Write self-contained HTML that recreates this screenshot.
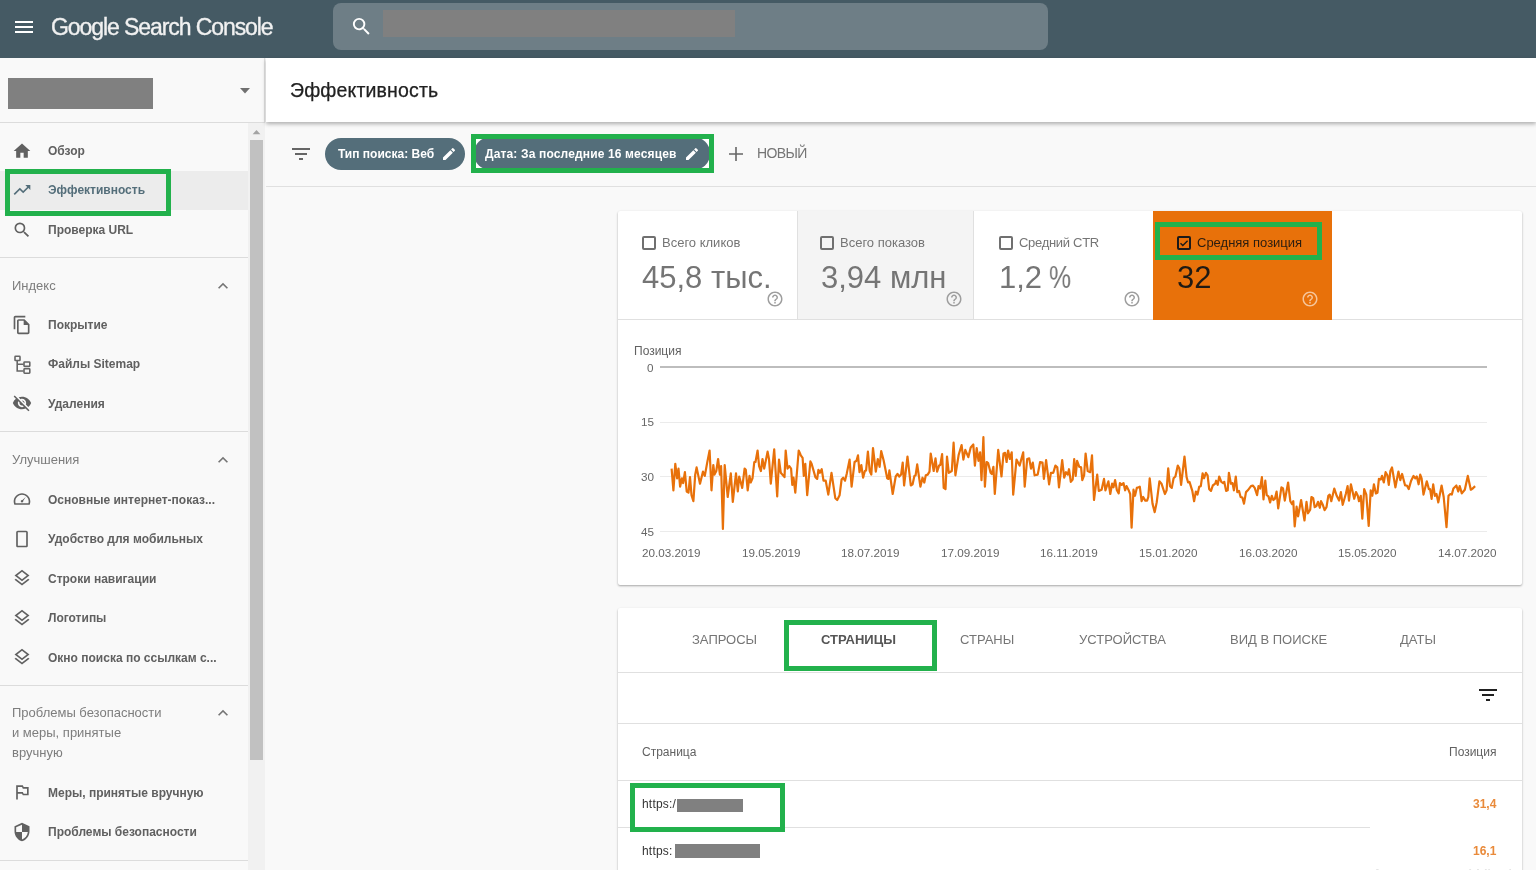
<!DOCTYPE html>
<html><head><meta charset="utf-8">
<style>
*{box-sizing:border-box}
html,body{margin:0;padding:0;width:1536px;height:870px;overflow:hidden;background:#f9f9f9;font-family:"Liberation Sans",sans-serif;-webkit-font-smoothing:antialiased}
.t{will-change:transform}
.a{position:absolute}
.t{position:absolute;white-space:nowrap;line-height:1}
svg{display:block}
#hdr{left:0;top:0;width:1536px;height:58px;background:#455a64}
#side{left:0;top:58px;width:265px;height:812px;background:#f9f9f9;border-right:1px solid #e0e0e0}
.sep{position:absolute;left:0;width:248px;height:1px;background:#dcdcdc}
.nav{position:absolute;left:48px;font-size:12px;font-weight:700;color:#606060}
.sec{position:absolute;left:12px;font-size:13px;color:#7d7d7d}
.ico{position:absolute;fill:#616161}
.green{position:absolute;border:5px solid #22b14c}
.card{position:absolute;background:#fff;border-radius:2px;box-shadow:0 1px 2px rgba(0,0,0,.25),0 1px 3px rgba(0,0,0,.1)}
.lbl{position:absolute;font-size:13px;color:#757575}
.big{position:absolute;font-size:31px;color:#757575}
.cb{position:absolute;width:14px;height:14px;border:2px solid #707070;border-radius:2px}
.tab{position:absolute;font-size:13px;color:#757575}
.dl{position:absolute;font-size:11.7px;color:#666}
</style></head><body>
<!-- header -->
<div id="hdr" class="a">
  <svg class="a" style="left:12px;top:15px" width="24" height="24" viewBox="0 0 24 24"><path fill="#fff" d="M3 18h18v-2H3v2zm0-5h18v-2H3v2zm0-7v2h18V6H3z"/></svg>
  <div class="t" style="left:51px;top:16px;font-size:23px;letter-spacing:-1.08px;color:#f1f1f1;-webkit-text-stroke:.35px #f1f1f1">Google Search Console</div>
  <div class="a" style="left:333px;top:3px;width:715px;height:47px;border-radius:8px;background:#6e7e86"></div>
  <svg class="a" style="left:350px;top:15px" width="23" height="23" viewBox="0 0 24 24"><path fill="#fff" d="M15.5 14h-.79l-.28-.27A6.471 6.471 0 0 0 16 9.5 6.5 6.5 0 1 0 9.5 16c1.61 0 3.09-.59 4.23-1.57l.27.28v.79l5 4.99L20.49 19l-4.99-5zm-6 0C7.01 14 5 11.99 5 9.5S7.01 5 9.5 5 14 7.01 14 9.5 11.99 14 9.5 14z"/></svg>
  <div class="a" style="left:383px;top:10px;width:352px;height:27px;background:#808080"></div>
</div>

<!-- sidebar -->
<div id="side" class="a">
  <div class="a" style="left:8px;top:20px;width:145px;height:31px;background:#808080"></div>
  <svg class="a" style="left:233px;top:20px" width="24" height="24" viewBox="0 0 24 24"><path fill="#707070" d="M7 10l5 5.5 5-5.5z"/></svg>
  <div class="sep" style="top:64px;width:265px"></div>
</div>
<!-- scrollbar -->
<div class="a" style="left:248px;top:123px;width:17px;height:747px;background:#f1f1f1"></div>
<div class="a" style="left:250px;top:140px;width:13px;height:620px;background:#c1c1c1"></div>
<svg class="a" style="left:252px;top:129px" width="9" height="6" viewBox="0 0 9 6"><path fill="#a3a3a3" d="M.6 5.2L4.5 1 8.4 5.2z"/></svg>

<!-- selected nav bg -->
<div class="a" style="left:0;top:171px;width:248px;height:39px;background:#ececec"></div>

<!-- nav items -->
<svg class="ico" style="left:12px;top:141px" width="20" height="20" viewBox="0 0 24 24"><path d="M10 20v-6h4v6h5v-8h3L12 3 2 12h3v8z"/></svg>
<div class="t nav" style="top:145px">Обзор</div>
<svg class="ico" style="left:12px;top:180px;fill:#546e7a" width="20" height="20" viewBox="0 0 24 24"><path d="M16 6l2.29 2.29-4.88 4.88-4-4L2 16.59 3.41 18l6-6 4 4 6.3-6.29L22 12V6z"/></svg>
<div class="t nav" style="top:184px;color:#546e7a">Эффективность</div>
<svg class="ico" style="left:12px;top:220px" width="20" height="20" viewBox="0 0 24 24"><path d="M15.5 14h-.79l-.28-.27A6.471 6.471 0 0 0 16 9.5 6.5 6.5 0 1 0 9.5 16c1.61 0 3.09-.59 4.23-1.57l.27.28v.79l5 4.99L20.49 19l-4.99-5zm-6 0C7.01 14 5 11.99 5 9.5S7.01 5 9.5 5 14 7.01 14 9.5 11.99 14 9.5 14z"/></svg>
<div class="t nav" style="top:224px">Проверка URL</div>
<div class="sep" style="top:257px"></div>

<div class="t sec" style="top:279px">Индекс</div>
<svg class="ico" style="left:213px;top:276px;fill:#757575" width="20" height="20" viewBox="0 0 24 24"><path d="M12 8l-6 6 1.41 1.41L12 10.83l4.59 4.58L18 14z"/></svg>
<svg class="ico" style="left:11.7px;top:314.7px" width="20" height="20" viewBox="0 0 24 24"><path d="M16 1H4c-1.1 0-2 .9-2 2v14h2V3h12V1zm-1 4H8c-1.1 0-1.99.9-1.99 2L6 21c0 1.1.89 2 1.99 2H19c1.1 0 2-.9 2-2V11l-6-6zM8 21V7h6v5h5v9H8z"/></svg>
<div class="t nav" style="top:319px">Покрытие</div>
<svg class="ico" style="left:12px;top:354px" width="20" height="20" viewBox="0 0 20 20"><g fill="none" stroke="#666" stroke-width="1.6"><rect x="3" y="2.3" width="5" height="4.2" rx=".6"/><path d="M5.2 6.5V17H11.6M5.2 10.2H11.6"/><rect x="12" y="8" width="5.8" height="4.4" rx=".6"/><rect x="12" y="14.8" width="5.8" height="4.4" rx=".6"/></g></svg>
<div class="t nav" style="top:358px">Файлы Sitemap</div>
<svg class="ico" style="left:12px;top:393px" width="20" height="20" viewBox="0 0 24 24"><path d="M12 7c2.76 0 5 2.24 5 5 0 .65-.13 1.26-.36 1.83l2.92 2.92c1.51-1.26 2.7-2.890 3.43-4.75-1.73-4.39-6-7.5-11-7.5-1.4 0-2.74.25-3.98.7l2.16 2.16C10.74 7.13 11.35 7 12 7zM2 4.27l2.28 2.28.46.46A11.804 11.804 0 0 0 1 12c1.73 4.39 6 7.5 11 7.5 1.55 0 3.03-.3 4.38-.84l.42.42L19.73 22 21 20.73 3.27 3 2 4.270zM7.53 9.8l1.55 1.55c-.05.21-.08.43-.08.65 0 1.66 1.34 3 3 3 .22 0 .44-.03.65-.08l1.55 1.55c-.67.33-1.41.53-2.2.53-2.76 0-5-2.24-5-5 0-.79.2-1.53.53-2.2zm4.31-.78l3.150 3.15.02-.16c0-1.66-1.34-3-3-3l-.17.01z"/></svg>
<div class="t nav" style="top:398px">Удаления</div>
<div class="sep" style="top:431px"></div>

<div class="t sec" style="top:453px">Улучшения</div>
<svg class="ico" style="left:213px;top:450px;fill:#757575" width="20" height="20" viewBox="0 0 24 24"><path d="M12 8l-6 6 1.41 1.41L12 10.83l4.59 4.58L18 14z"/></svg>
<svg class="ico" style="left:12px;top:489px" width="20" height="20" viewBox="0 0 24 24"><path d="M12 5C6.5 5 2 9.5 2 15c0 1.1.2 2.2.6 3.2l.3.8h18.2l.3-.8c.4-1 .6-2.1.6-3.2 0-5.5-4.5-10-10-10zm7.7 12H4.3C4.1 16.4 4 15.700 4 15c0-4.4 3.6-8 8-8s8 3.6 8 8c0 .7-.1 1.4-.3 2zM16.5 9.5l-4 3.600c-.8-.2-1.700.3-1.900 1.100-.3.800.2 1.600 1 1.900.800.2 1.600-.2 1.900-1 .1-.3.1-.6 0-.9z"/></svg>
<div class="t nav" style="top:494px">Основные интернет-показ...</div>
<svg class="ico" style="left:12px;top:529px" width="20" height="20" viewBox="0 0 24 24"><path d="M17 2H7c-1.1 0-2 .9-2 2v16c0 1.1.9 2 2 2h10c1.1 0 2-.9 2-2V4c0-1.1-.9-2-2-2zm0 18H7V4h10v16z"/></svg>
<div class="t nav" style="top:533px">Удобство для мобильных</div>
<svg class="ico" style="left:12px;top:568px" width="20" height="20" viewBox="0 0 24 24"><path d="M11.99 18.54l-7.37-5.73L3 14.07l9 7 9-7-1.63-1.27-7.38 5.74zM12 16l7.36-5.73L21 9l-9-7-9 7 1.63 1.27L12 16zm0-11.47L17.74 9 12 13.47 6.26 9 12 4.53z"/></svg>
<div class="t nav" style="top:573px">Строки навигации</div>
<svg class="ico" style="left:12px;top:608px" width="20" height="20" viewBox="0 0 24 24"><path d="M11.99 18.54l-7.37-5.73L3 14.07l9 7 9-7-1.63-1.27-7.38 5.74zM12 16l7.36-5.73L21 9l-9-7-9 7 1.63 1.27L12 16zm0-11.47L17.74 9 12 13.47 6.26 9 12 4.53z"/></svg>
<div class="t nav" style="top:612px">Логотипы</div>
<svg class="ico" style="left:12px;top:647px" width="20" height="20" viewBox="0 0 24 24"><path d="M11.99 18.54l-7.37-5.73L3 14.07l9 7 9-7-1.63-1.27-7.38 5.74zM12 16l7.36-5.73L21 9l-9-7-9 7 1.63 1.27L12 16zm0-11.47L17.74 9 12 13.47 6.26 9 12 4.53z"/></svg>
<div class="t nav" style="top:652px">Окно поиска по ссылкам с...</div>
<div class="sep" style="top:685px"></div>

<div class="t sec" style="top:707px;line-height:20px;top:703px;white-space:normal;width:200px">Проблемы безопасности<br>и меры, принятые<br>вручную</div>
<svg class="ico" style="left:213px;top:703px;fill:#757575" width="20" height="20" viewBox="0 0 24 24"><path d="M12 8l-6 6 1.41 1.41L12 10.83l4.59 4.58L18 14z"/></svg>
<svg class="ico" style="left:12px;top:782px" width="20" height="20" viewBox="0 0 24 24"><path d="M14 6l-1-2H5v17h2v-7h5l1 2h7V6h-6zm4 8h-4l-1-2H7V6h5l1 2h5v6z"/></svg>
<div class="t nav" style="top:787px">Меры, принятые вручную</div>
<svg class="ico" style="left:12px;top:822px" width="20" height="20" viewBox="0 0 24 24"><path d="M12 1L3 5v6c0 5.55 3.84 10.74 9 12 5.16-1.26 9-6.45 9-12V5l-9-4zm0 10.99h7c-.53 4.12-3.28 7.79-7 8.94V12H5V6.3l7-3.11v8.8z"/></svg>
<div class="t nav" style="top:826px">Проблемы безопасности</div>
<div class="sep" style="top:860px"></div>

<div class="green" style="left:5px;top:169px;width:166px;height:47px"></div>

<!-- page header -->
<div class="a" style="left:266px;top:58px;width:1270px;height:64px;background:#fff;box-shadow:0 2px 4px rgba(0,0,0,.3)"></div>
<div class="t" style="left:289.5px;top:80.5px;font-size:19.5px;letter-spacing:.15px;color:#212121;-webkit-text-stroke:.25px #212121">Эффективность</div>

<!-- filter bar -->
<div class="a" style="left:266px;top:186px;width:1270px;height:1px;background:#e0e0e0"></div>
<svg class="ico" style="left:289px;top:141.5px;fill:#666" width="24" height="24" viewBox="0 0 24 24"><path d="M10 18h4v-2h-4v2zM3 6v2h18V6H3zm3 7h12v-2H6v2z"/></svg>
<div class="a" style="left:325px;top:138px;width:140px;height:32px;border-radius:16px;background:#546e7a"></div>
<div class="t" style="left:338px;top:147.5px;font-size:12px;font-weight:700;color:#fff">Тип поиска: Веб</div>
<svg class="a" style="left:441px;top:146px" width="16" height="16" viewBox="0 0 24 24"><path fill="#fff" d="M3 17.250V21h3.75L17.81 9.94l-3.75-3.75L3 17.25zM20.71 7.04a.996.996 0 0 0 0-1.41l-2.34-2.34a.996.996 0 0 0-1.41 0l-1.83 1.83 3.75 3.75 1.83-1.83z"/></svg>
<div class="a" style="left:471px;top:134px;width:243px;height:39px;background:#fff"></div>
<div class="a" style="left:474px;top:137px;width:236px;height:33px;border-radius:16px;background:#546e7a"></div>
<div class="t" style="left:485px;top:147.5px;font-size:12px;font-weight:700;letter-spacing:.15px;color:#fff">Дата: За последние 16 месяцев</div>
<svg class="a" style="left:684px;top:146px" width="16" height="16" viewBox="0 0 24 24"><path fill="#fff" d="M3 17.250V21h3.75L17.81 9.94l-3.75-3.75L3 17.25zM20.71 7.04a.996.996 0 0 0 0-1.41l-2.34-2.34a.996.996 0 0 0-1.41 0l-1.83 1.83 3.75 3.75 1.83-1.83z"/></svg>
<div class="green" style="left:471px;top:134px;width:243px;height:39px"></div>
<svg class="a" style="left:724px;top:142px" width="24" height="24" viewBox="0 0 24 24"><path fill="#666" d="M19 12.8h-6.2V19h-1.6v-6.2H5v-1.6h6.2V5h1.6v6.2H19z"/></svg>
<div class="t" style="left:756.5px;top:145.5px;font-size:14px;letter-spacing:-.6px;color:#757575">НОВЫЙ</div>

<!-- card 1 -->
<div class="card" style="left:618px;top:211px;width:904px;height:374px"></div>
<div class="a" style="left:797px;top:211px;width:177px;height:108px;background:#f4f4f4;border-left:1px solid #e0e0e0;border-right:1px solid #e0e0e0"></div>
<div class="a" style="left:618px;top:319px;width:904px;height:1px;background:#e0e0e0"></div>
<div class="a" style="left:1153px;top:211px;width:179px;height:109px;background:#e8710a"></div>

<div class="cb" style="left:642px;top:236px"></div>
<div class="t lbl" style="left:662px;top:236px">Всего кликов</div>
<div class="t big" style="left:642px;top:262px">45,8 тыс.</div>
<div class="cb" style="left:820px;top:236px"></div>
<div class="t lbl" style="left:840px;top:236px">Всего показов</div>
<div class="t big" style="left:821px;top:262px">3,94 млн</div>
<div class="cb" style="left:999px;top:236px"></div>
<div class="t lbl" style="left:1019px;top:236px;letter-spacing:-.3px">Средний CTR</div>
<div class="t big" style="left:999px;top:262px">1,2</div><div class="t big" style="left:1049px;top:262px;transform:scaleX(.8);transform-origin:0 0">%</div>
<div class="cb" style="left:1177px;top:236px;border-color:#1a1a1a"></div>
<svg class="a" style="left:1177px;top:236px" width="14" height="14" viewBox="0 0 14 14"><path d="M3.5 7.2l2.3 2.3 4.8-4.8" fill="none" stroke="#1a1a1a" stroke-width="1.4"/></svg>
<div class="t lbl" style="left:1197px;top:236px;color:#2a1d10">Средняя позиция</div>
<div class="t big" style="left:1177px;top:262px;color:#1f1a14">32</div>
<svg class="a" style="left:766px;top:290px" width="18" height="18" viewBox="0 0 24 24"><path fill="#9e9e9e" d="M11 18h2v-2h-2v2zm1-16C6.48 2 2 6.48 2 12s4.48 10 10 10 10-4.48 10-10S17.52 2 12 2zm0 18c-4.41 0-8-3.590-8-8s3.59-8 8-8 8 3.59 8 8-3.59 8-8 8zm0-14c-2.21 0-4 1.79-4 4h2c0-1.1.9-2 2-2s2 .9 2 2c0 2-3 1.75-3 5h2c0-2.25 3-2.5 3-5 0-2.21-1.79-4-4-4z"/></svg>
<svg class="a" style="left:945px;top:290px" width="18" height="18" viewBox="0 0 24 24"><path fill="#9e9e9e" d="M11 18h2v-2h-2v2zm1-16C6.48 2 2 6.48 2 12s4.48 10 10 10 10-4.48 10-10S17.52 2 12 2zm0 18c-4.41 0-8-3.590-8-8s3.59-8 8-8 8 3.59 8 8-3.59 8-8 8zm0-14c-2.21 0-4 1.79-4 4h2c0-1.1.9-2 2-2s2 .9 2 2c0 2-3 1.75-3 5h2c0-2.25 3-2.5 3-5 0-2.21-1.79-4-4-4z"/></svg>
<svg class="a" style="left:1123px;top:290px" width="18" height="18" viewBox="0 0 24 24"><path fill="#9e9e9e" d="M11 18h2v-2h-2v2zm1-16C6.48 2 2 6.48 2 12s4.48 10 10 10 10-4.48 10-10S17.52 2 12 2zm0 18c-4.41 0-8-3.590-8-8s3.59-8 8-8 8 3.59 8 8-3.59 8-8 8zm0-14c-2.21 0-4 1.79-4 4h2c0-1.1.9-2 2-2s2 .9 2 2c0 2-3 1.75-3 5h2c0-2.25 3-2.5 3-5 0-2.21-1.79-4-4-4z"/></svg>
<svg class="a" style="left:1301px;top:290px" width="18" height="18" viewBox="0 0 24 24"><path fill="#f6c59a" d="M11 18h2v-2h-2v2zm1-16C6.48 2 2 6.48 2 12s4.48 10 10 10 10-4.48 10-10S17.52 2 12 2zm0 18c-4.41 0-8-3.590-8-8s3.59-8 8-8 8 3.59 8 8-3.59 8-8 8zm0-14c-2.21 0-4 1.79-4 4h2c0-1.1.9-2 2-2s2 .9 2 2c0 2-3 1.75-3 5h2c0-2.25 3-2.5 3-5 0-2.21-1.79-4-4-4z"/></svg>
<div class="green" style="left:1155px;top:222px;width:167px;height:38px"></div>

<!-- chart -->
<div class="t" style="left:634px;top:345px;font-size:12px;color:#616161">Позиция</div>
<div class="a" style="left:660px;top:366px;width:827px;height:2px;background:#bdbdbd"></div>
<div class="a" style="left:660px;top:422px;width:827px;height:1px;background:#ebebeb"></div>
<div class="a" style="left:660px;top:476px;width:827px;height:1px;background:#ebebeb"></div>
<div class="a" style="left:660px;top:531px;width:827px;height:1px;background:#ebebeb"></div>
<div class="t dl" style="left:647px;top:362px">0</div>
<div class="t dl" style="left:641px;top:416px">15</div>
<div class="t dl" style="left:641px;top:471px">30</div>
<div class="t dl" style="left:641px;top:526px">45</div>
<svg class="a" style="left:0;top:0" width="1536" height="870"><path d="M671.6,468.6 L673.4,490.3 L675.3,463.8 L677.1,478.3 L678.5,468.6 L680.1,486.7 L681.9,478.3 L683.1,483.1 L684.9,472.2 L686.7,491.5 L688.5,492.7 L690.0,477.1 L691.5,495.2 L693.4,501.2 L695.2,474.6 L696.6,467.4 L700.0,483.7 L703.0,471.6 L704.8,475.9 L707.2,462.6 L709.6,450.5 L711.5,490.3 L713.3,465.0 L714.5,474.6 L716.3,471.0 L718.1,459.0 L719.9,474.6 L721.1,466.2 L722.9,529.0 L724.7,465.0 L727.7,497.0 L730.8,473.4 L732.8,501.8 L736.0,473.4 L737.8,491.5 L739.2,476.5 L742.2,487.9 L744.6,468.6 L745.8,469.8 L747.7,490.3 L749.5,475.9 L750.7,482.5 L752.5,478.3 L754.3,462.0 L755.5,462.0 L757.6,450.5 L759.1,466.2 L760.9,471.0 L762.5,459.0 L764.2,468.6 L767.6,451.7 L769.0,459.0 L770.8,483.7 L774.2,449.3 L777.2,496.4 L779.0,459.6 L780.8,472.8 L784.5,477.1 L785.7,450.5 L787.5,468.6 L789.3,466.2 L791.1,468.6 L792.3,484.9 L793.5,477.7 L795.3,492.7 L798.7,450.5 L800.8,455.3 L802.6,457.8 L803.8,475.9 L805.3,463.8 L807.2,495.2 L810.4,461.4 L811.6,463.8 L815.4,477.1 L817.2,478.9 L818.4,469.8 L819.9,472.8 L821.7,469.2 L823.5,480.7 L825.7,480.7 L828.3,494.6 L831.5,472.8 L835.3,498.2 L837.2,500.0 L839.6,495.2 L841.6,479.5 L843.2,477.7 L845.0,480.7 L846.8,473.4 L849.6,459.6 L851.6,486.7 L854.6,462.0 L856.5,460.8 L858.0,455.3 L859.5,472.2 L861.3,465.0 L863.1,477.7 L864.9,471.0 L866.1,470.4 L867.9,451.7 L869.7,471.0 L871.3,474.6 L873.0,448.1 L875.8,471.6 L877.8,459.0 L879.6,466.8 L881.2,451.1 L883.6,460.2 L887.2,478.3 L888.4,478.9 L889.4,470.4 L892.7,494.0 L895.7,476.5 L897.5,474.0 L899.3,476.5 L901.1,474.6 L902.7,462.6 L904.1,485.5 L907.5,456.5 L910.8,485.5 L912.6,484.3 L914.4,475.9 L915.6,475.3 L917.2,464.4 L920.4,486.7 L922.5,477.7 L924.3,482.5 L925.8,475.3 L927.7,474.6 L929.5,471.6 L930.7,453.5 L933.7,471.0 L935.5,458.4 L937.1,471.6 L939.1,465.6 L940.3,465.0 L942.1,454.1 L943.7,487.9 L945.5,489.1 L947.0,456.5 L948.8,472.8 L951.8,471.0 L953.6,442.7 L955.4,475.3 L958.7,454.7 L961.6,445.1 L963.4,459.6 L965.3,449.9 L968.3,457.2 L970.7,447.5 L973.3,444.5 L974.9,465.6 L976.7,448.1 L978.5,460.8 L980.1,452.3 L981.5,480.1 L983.4,437.2 L984.9,486.7 L986.6,462.0 L988.2,463.2 L990.6,472.8 L991.8,474.0 L993.4,466.8 L994.8,494.0 L998.2,449.9 L1001.5,476.5 L1003.5,453.5 L1005.1,452.9 L1006.6,462.0 L1008.1,450.5 L1009.9,459.0 L1011.7,452.3 L1013.2,494.6 L1016.5,459.6 L1019.6,465.6 L1023.2,452.3 L1024.7,486.7 L1027.2,459.0 L1029.2,458.4 L1031.0,468.6 L1032.8,462.6 L1034.6,475.3 L1037.7,474.6 L1040.1,462.0 L1042.5,462.6 L1043.9,478.9 L1046.1,460.2 L1049.1,484.3 L1050.9,472.8 L1053.3,472.8 L1055.4,465.6 L1057.3,467.4 L1059.0,487.3 L1062.2,460.2 L1064.2,477.7 L1066.0,472.2 L1067.8,474.6 L1069.0,469.2 L1070.8,481.9 L1072.7,479.5 L1074.2,459.0 L1075.7,475.9 L1077.1,460.8 L1079.3,466.8 L1081.1,467.4 L1082.3,480.1 L1084.1,475.3 L1085.6,453.5 L1087.7,471.0 L1090.2,472.2 L1092.0,455.3 L1094.0,500.0 L1097.2,474.6 L1098.8,490.9 L1101.6,489.7 L1104.0,478.9 L1105.4,490.3 L1108.4,481.3 L1110.3,494.0 L1112.1,483.7 L1113.5,487.3 L1115.1,480.1 L1116.9,490.3 L1118.7,493.4 L1119.9,483.1 L1121.7,484.9 L1123.5,483.1 L1125.1,490.3 L1126.5,486.1 L1128.4,489.7 L1130.2,494.0 L1131.6,527.7 L1133.5,489.7 L1135.0,495.8 L1136.8,487.9 L1138.6,487.3 L1139.8,486.7 L1141.6,501.2 L1143.2,497.0 L1145.3,500.6 L1147.1,500.6 L1148.3,497.0 L1149.7,478.3 L1152.5,503.6 L1154.7,512.1 L1156.7,502.4 L1159.4,481.3 L1161.5,483.7 L1164.9,494.0 L1166.6,490.3 L1168.2,468.4 L1170.0,486.1 L1171.8,487.9 L1173.6,478.3 L1175.4,476.5 L1177.8,465.6 L1179.4,468.6 L1181.1,484.9 L1184.5,456.5 L1186.6,477.1 L1188.1,482.5 L1189.5,481.9 L1192.3,490.9 L1194.1,501.2 L1195.9,491.5 L1197.5,494.6 L1199.2,486.7 L1200.8,486.1 L1202.6,473.4 L1204.0,478.3 L1205.9,472.8 L1207.6,475.3 L1209.2,489.1 L1211.0,490.9 L1212.8,485.5 L1215.2,483.7 L1216.1,480.7 L1217.7,484.9 L1219.2,476.5 L1221.3,481.9 L1223.1,483.1 L1224.3,481.9 L1226.1,490.9 L1227.7,490.3 L1228.9,472.8 L1230.9,483.7 L1232.5,483.1 L1233.9,490.3 L1235.8,476.5 L1237.3,492.1 L1239.0,490.9 L1240.6,497.0 L1242.4,497.6 L1244.0,503.6 L1246.0,492.1 L1247.8,490.3 L1251.0,486.1 L1252.8,485.5 L1254.7,487.9 L1257.1,495.2 L1258.5,486.1 L1260.1,488.5 L1261.9,477.1 L1263.5,499.4 L1265.3,480.7 L1266.7,495.2 L1268.5,496.4 L1270.1,502.4 L1271.8,495.8 L1273.4,500.0 L1274.9,498.8 L1276.6,491.5 L1278.2,508.4 L1281.4,487.3 L1283.0,488.5 L1284.8,500.6 L1288.1,482.5 L1290.3,501.2 L1292.1,504.2 L1293.3,501.2 L1294.7,526.5 L1296.6,506.6 L1298.1,516.3 L1301.1,500.0 L1304.5,520.5 L1306.5,501.8 L1308.0,513.3 L1310.2,509.6 L1311.4,497.0 L1313.2,498.2 L1314.7,507.2 L1316.4,506.0 L1318.0,501.8 L1319.8,507.8 L1321.0,501.2 L1322.8,504.8 L1324.6,510.2 L1326.5,507.2 L1328.3,495.8 L1329.7,494.6 L1331.3,501.2 L1334.3,488.5 L1336.7,495.8 L1339.1,500.6 L1340.9,492.1 L1342.7,504.8 L1345.8,494.0 L1347.6,486.1 L1349.0,500.6 L1350.9,484.3 L1354.2,498.8 L1356.0,492.1 L1357.8,495.8 L1359.0,501.2 L1360.8,495.8 L1362.3,518.7 L1364.2,489.1 L1366.3,494.6 L1368.7,525.9 L1370.7,490.3 L1372.3,495.8 L1373.9,484.3 L1375.9,493.4 L1377.5,492.7 L1378.9,478.9 L1380.8,479.5 L1382.0,475.9 L1383.8,482.5 L1385.6,472.2 L1387.4,475.3 L1388.8,484.9 L1390.4,471.0 L1392.0,467.4 L1395.4,487.3 L1398.4,471.6 L1400.3,480.1 L1402.1,474.0 L1405.1,485.5 L1406.9,485.5 L1408.7,489.1 L1411.1,480.7 L1413.5,475.9 L1415.3,478.3 L1416.8,476.5 L1418.6,484.3 L1420.2,474.6 L1421.6,478.3 L1423.5,494.6 L1426.8,481.3 L1428.9,489.1 L1430.1,489.1 L1431.6,498.8 L1433.2,484.3 L1434.9,495.8 L1436.5,494.0 L1438.3,502.4 L1441.6,485.5 L1443.7,497.0 L1446.5,527.1 L1448.5,495.8 L1450.3,494.0 L1451.8,494.6 L1453.4,488.5 L1456.4,485.5 L1458.2,491.5 L1459.7,486.1 L1461.8,493.4 L1464.8,489.7 L1467.8,475.9 L1470.8,489.7 L1472.7,488.5 L1475.1,486.1" fill="none" stroke="#e8710a" stroke-width="2.2" stroke-linejoin="round"/></svg>
<div class="t dl" style="left:642px;top:547px">20.03.2019</div>
<div class="t dl" style="left:742px;top:547px">19.05.2019</div>
<div class="t dl" style="left:841px;top:547px">18.07.2019</div>
<div class="t dl" style="left:941px;top:547px">17.09.2019</div>
<div class="t dl" style="left:1040px;top:547px">16.11.2019</div>
<div class="t dl" style="left:1139px;top:547px">15.01.2020</div>
<div class="t dl" style="left:1239px;top:547px">16.03.2020</div>
<div class="t dl" style="left:1338px;top:547px">15.05.2020</div>
<div class="t dl" style="left:1438px;top:547px">14.07.2020</div>

<!-- card 2 -->
<div class="card" style="left:618px;top:608px;width:904px;height:270px"></div>
<div class="t tab" style="left:692px;top:633px">ЗАПРОСЫ</div>
<div class="t tab" style="left:821px;top:633px;font-weight:700;color:#555">СТРАНИЦЫ</div>
<div class="t tab" style="left:960px;top:633px">СТРАНЫ</div>
<div class="t tab" style="left:1079px;top:633px">УСТРОЙСТВА</div>
<div class="t tab" style="left:1230px;top:633px">ВИД В ПОИСКЕ</div>
<div class="t tab" style="left:1400px;top:633px">ДАТЫ</div>
<div class="a" style="left:618px;top:672px;width:904px;height:1px;background:#e0e0e0"></div>
<div class="green" style="left:784px;top:620px;width:153px;height:51px"></div>
<svg class="a" style="left:1476px;top:683px" width="24" height="24" viewBox="0 0 24 24"><path fill="#212121" d="M10 18h4v-2h-4v2zM3 6v2h18V6H3zm3 7h12v-2H6v2z"/></svg>
<div class="a" style="left:618px;top:723px;width:904px;height:1px;background:#e0e0e0"></div>
<div class="t" style="left:642px;top:746px;font-size:12px;color:#616161">Страница</div>
<div class="t" style="left:1449px;top:746px;font-size:12px;color:#616161">Позиция</div>
<div class="a" style="left:618px;top:780px;width:904px;height:1px;background:#e0e0e0"></div>
<div class="t" style="left:641.5px;top:798px;font-size:12px;letter-spacing:.2px;color:#333">https:/</div>
<div class="a" style="left:677px;top:799px;width:66px;height:13px;background:#808080"></div>
<div class="t" style="left:1473px;top:798px;font-size:12px;font-weight:700;color:#e98a3a">31,4</div>
<div class="a" style="left:618px;top:827px;width:752px;height:1px;background:#e0e0e0"></div>
<div class="t" style="left:641.5px;top:844.5px;font-size:12px;letter-spacing:.2px;color:#333">https:</div>
<div class="a" style="left:675px;top:844px;width:85px;height:14px;background:#808080"></div>
<div class="t" style="left:1473px;top:845px;font-size:12px;font-weight:700;color:#e98a3a">16,1</div>
<div class="green" style="left:630px;top:783px;width:155px;height:49px"></div>
<div class="t" style="left:1371px;top:866px;font-size:19px;color:rgba(0,0,0,.10)">Активация Windows</div>
</body></html>
